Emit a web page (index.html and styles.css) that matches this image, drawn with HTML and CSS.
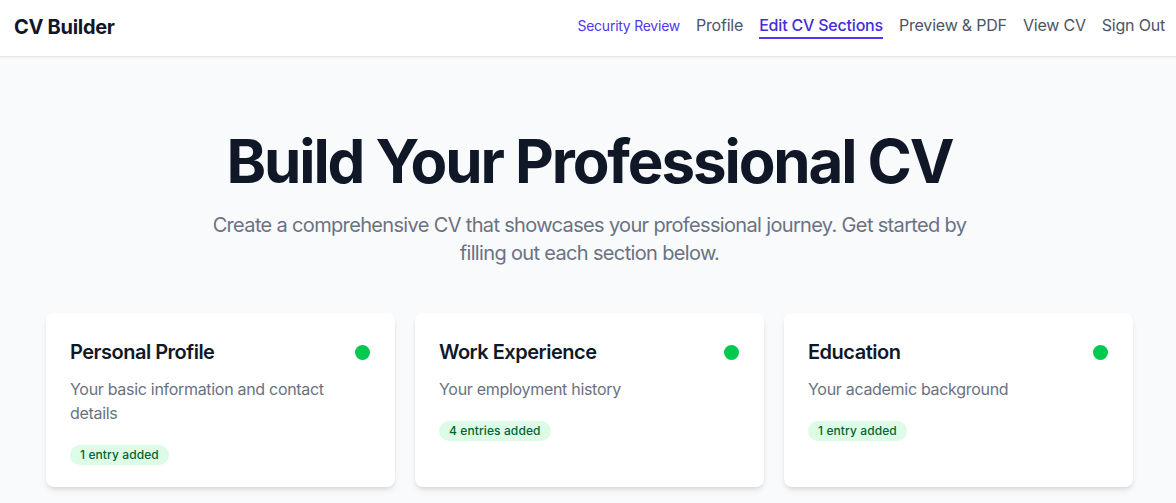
FILE: index.html
```html
<!DOCTYPE html>
<html lang="en">
<head>
<meta charset="utf-8">
<title>CV Builder</title>
<link rel="stylesheet" href="styles.css">
</head>
<body>
<header class="topbar">
  <div class="brand">CV Builder</div>
  <nav class="nav">
    <a class="nav-link nav-security" href="#">Security Review</a>
    <a class="nav-link" href="#">Profile</a>
    <a class="nav-link nav-active" href="#">Edit CV Sections</a>
    <a class="nav-link" href="#">Preview &amp; PDF</a>
    <a class="nav-link" href="#">View CV</a>
    <a class="nav-link" href="#">Sign Out</a>
  </nav>
</header>
<main class="main">
  <section class="hero">
    <h1 class="hero-title">Build Your Professional CV</h1>
    <p class="hero-sub">Create a comprehensive CV that showcases your professional journey. Get started by filling out each section below.</p>
  </section>
  <section class="cards">
    <div class="card">
      <div class="card-head">
        <h2 class="card-title">Personal Profile</h2>
        <span class="dot"></span>
      </div>
      <p class="card-desc">Your basic information and contact details</p>
      <div class="card-foot"><span class="badge">1 entry added</span></div>
    </div>
    <div class="card">
      <div class="card-head">
        <h2 class="card-title">Work Experience</h2>
        <span class="dot"></span>
      </div>
      <p class="card-desc">Your employment history</p>
      <div class="card-foot"><span class="badge">4 entries added</span></div>
    </div>
    <div class="card">
      <div class="card-head">
        <h2 class="card-title">Education</h2>
        <span class="dot"></span>
      </div>
      <p class="card-desc">Your academic background</p>
      <div class="card-foot"><span class="badge">1 entry added</span></div>
    </div>
  </section>
</main>
</body>
</html>
```

FILE: styles.css
```css
* { box-sizing: border-box; }
html, body { margin: 0; padding: 0; }
body {
  font-family: Inter, "Liberation Sans", sans-serif;
  background: #f9fafb;
  color: #101828;
  height: 503px;
  overflow: hidden;
}
.topbar {
  height: 57px;
  background: #ffffff;
  border-bottom: 1px solid #e5e7eb;
  box-shadow: 0 1px 2px rgba(0,0,0,0.05);
  display: flex;
  justify-content: space-between;
  align-items: flex-start;
  padding: 13px 11px 0 14px;
}
.brand {
  font-size: 20px;
  line-height: 28px;
  font-weight: 700;
  letter-spacing: -0.3px;
  color: #101828;
}
.nav {
  display: flex;
  align-items: flex-start;
  gap: 16px;
}
.nav-link {
  font-size: 16px;
  line-height: 24px;
  letter-spacing: -0.2px;
  color: #4a5565;
  text-decoration: none;
  border-bottom: 2px solid transparent;
}
.nav-security {
  font-size: 14px;
  line-height: 24px;
  letter-spacing: -0.25px;
  color: #4f39f6;
  margin-top: 1px;
}
.nav-active {
  color: #432dd7;
  font-weight: 500;
  border-bottom-color: #4f39f6;
}
.main {
  padding: 80px 43px 0 46px;
}
.hero {
  text-align: center;
}
.hero-title {
  margin: 0;
  font-size: 60px;
  line-height: 48px;
  font-weight: 700;
  letter-spacing: -2.1px;
  color: #101828;
}
.hero-sub {
  margin: 26px auto 0;
  max-width: 768px;
  font-size: 20px;
  line-height: 28px;
  letter-spacing: -0.66px;
  color: #6a7282;
}
.cards {
  margin-top: 46px;
  display: grid;
  grid-template-columns: repeat(3, 1fr);
  gap: 20px;
}
.card {
  background: #ffffff;
  border-radius: 8px;
  box-shadow: 0 4px 6px -1px rgba(0,0,0,0.1), 0 2px 4px -2px rgba(0,0,0,0.1);
  padding: 25px 24px 22px;
}
.card-head {
  display: flex;
  justify-content: space-between;
  align-items: center;
}
.card-title {
  margin: 0;
  font-size: 20px;
  line-height: 28px;
  font-weight: 600;
  letter-spacing: -0.5px;
  color: #101828;
}
.dot {
  width: 15px;
  height: 15px;
  border-radius: 50%;
  background: #00c950;
  margin-right: 1px;
}
.card-desc {
  margin: 11px 0 0;
  font-size: 16px;
  line-height: 24px;
  letter-spacing: -0.3px;
  color: #6a7282;
}
.card-foot {
  margin-top: 16px;
  line-height: 24px;
}
.badge {
  display: inline-flex;
  align-items: center;
  padding: 2px 10px;
  border-radius: 9999px;
  background: #dcfce7;
  color: #016630;
  font-size: 12px;
  line-height: 16px;
  font-weight: 500;
  letter-spacing: 0.1px;
}
```
